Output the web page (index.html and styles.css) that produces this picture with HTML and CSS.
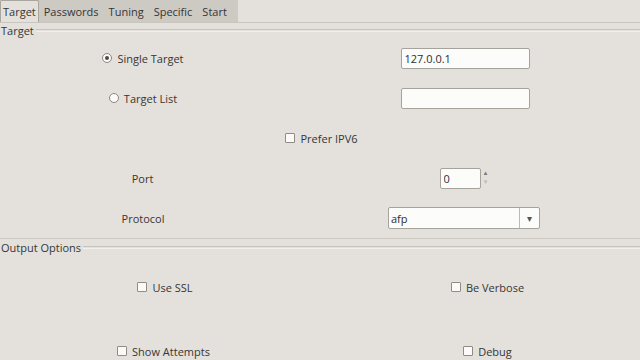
FILE: index.html
```html
<!DOCTYPE html>
<html lang="en">

<head>
    <meta charset="UTF-8">
    <title>xHydra - Target</title>
    <link rel="stylesheet" href="styles.css">
</head>

<body>
    <!-- Notebook tabs -->
    <div class="tab-strip">
        <div class="tabs">
            <span class="tab active">Target</span>
            <span class="tab">Passwords</span>
            <span class="tab">Tuning</span>
            <span class="tab">Specific</span>
            <span class="tab">Start</span>
        </div>
    </div>

    <!-- Target frame -->
    <div class="frame target-frame">
        <div class="frame-title"><span>Target</span></div>
        <div class="target-grid">
            <label class="opt"><span class="radio checked"></span>Single Target</label>
            <div class="cell"><input type="text" class="entry" value="127.0.0.1"></div>

            <label class="opt"><span class="radio"></span>Target List</label>
            <div class="cell"><input type="text" class="entry" value=""></div>

            <label class="opt wide"><span class="check"></span>Prefer IPV6</label>

            <span class="field-label port">Port</span>
            <div class="cell">
                <div class="spin">
                    <input type="text" class="spin-entry" value="0">
                    <span class="spin-arrows">
                        <span class="up">&#9652;</span>
                        <span class="down">&#9662;</span>
                    </span>
                </div>
            </div>

            <span class="field-label">Protocol</span>
            <div class="cell">
                <div class="combo">
                    <span class="combo-text">afp</span>
                    <span class="combo-btn">&#9662;</span>
                </div>
            </div>
        </div>
    </div>

    <!-- Output options frame -->
    <div class="frame">
        <div class="frame-title out-title"><span>Output Options</span></div>
        <div class="output-grid">
            <label class="opt"><span class="check"></span>Use SSL</label>
            <label class="opt right"><span class="check"></span>Be Verbose</label>
            <label class="opt left"><span class="check"></span>Show Attempts</label>
            <label class="opt right"><span class="check"></span>Debug</label>
        </div>
    </div>
</body>

</html>
```

FILE: styles.css
```css
/* General Styles */
body {
    margin: 0;
    background-color: #e4e1dc;
    color: #363636;
    font-family: "Open Sans", "DejaVu Sans", sans-serif;
    font-size: 11px;
    overflow: hidden;
}

/* Tabs */
.tab-strip {
    height: 22px;
    border-bottom: 1px solid #c9c5bf;
}

.tabs {
    display: inline-flex;
    align-items: stretch;
    height: 22px;
    background-color: #cdc9c3;
    padding-right: 6px;
}

.tab {
    display: flex;
    align-items: center;
    padding: 0 5px;
    color: #363636;
}

.tab.active {
    background-color: #e4e1dc;
    border: 1px solid #a9a59f;
    border-bottom: none;
    border-radius: 2px 2px 0 0;
    padding: 0 2px;
}

/* Frames */
.frame-title {
    display: flex;
    align-items: center;
    height: 15px;
    padding-left: 1px;
}

.frame-title::after {
    content: "";
    flex: 1;
    height: 1px;
    margin-left: 2px;
    border-top: 1px solid #c7c3bd;
    border-bottom: 1px solid #f2f0ed;
}

.out-title {
    height: 16px;
}

.target-frame {
    border-bottom: 1px solid #cbc7c1;
}

.target-grid {
    display: grid;
    grid-template-columns: 286px 1fr;
    grid-template-rows: 40px 40px 40px 40px 40px;
    align-items: center;
    justify-items: center;
}

.output-grid {
    display: grid;
    grid-template-columns: 330px 1fr;
    grid-template-rows: 64px 64px;
    align-items: center;
    justify-items: center;
}

/* Options */
.opt {
    display: flex;
    align-items: center;
    gap: 5px;
}

.opt.wide {
    grid-column: 1 / 3;
    margin-left: 3px;
}

.opt.right {
    margin-left: 5px;
}

.opt.left {
    margin-right: 3px;
}

.radio {
    width: 8px;
    height: 8px;
    border: 1px solid #8a8680;
    border-radius: 50%;
    background-color: #fbfaf8;
    position: relative;
}

.radio.checked::after {
    content: "";
    position: absolute;
    top: 2px;
    left: 2px;
    width: 4px;
    height: 4px;
    border-radius: 50%;
    background-color: #4a4a4a;
}

.check {
    width: 8px;
    height: 8px;
    border: 1px solid #8f8b85;
    border-radius: 1px;
    background-color: #fbfaf8;
}

.field-label.port {
    margin-right: 1px;
}

/* Inputs */
.cell {
    justify-self: stretch;
    display: flex;
    justify-content: center;
}

.entry {
    box-sizing: border-box;
    width: 129px;
    height: 21px;
    padding: 0 3px;
    border: 1px solid #a6a29c;
    border-radius: 2px;
    background-color: #fcfcfb;
    font-family: inherit;
    font-size: 11px;
    color: #2e2e2e;
    margin-left: 4px;
}

.spin {
    display: flex;
    align-items: center;
    margin-left: 4px;
}

.spin-entry {
    box-sizing: border-box;
    width: 41px;
    height: 21px;
    padding: 0 3px;
    border: 1px solid #a6a29c;
    border-radius: 2px;
    background-color: #fcfcfb;
    font-family: inherit;
    font-size: 11px;
    color: #2e2e2e;
}

.spin-arrows {
    display: flex;
    flex-direction: column;
    width: 10px;
    height: 20px;
    font-size: 7px;
    line-height: 9px;
    text-align: center;
    color: #777;
}

.spin-arrows .down {
    color: #bbb;
}

.combo {
    box-sizing: border-box;
    display: flex;
    align-items: center;
    width: 152px;
    height: 22px;
    border: 1px solid #a6a29c;
    border-radius: 2px;
    background-color: #fcfcfb;
    margin-left: 2px;
}

.combo-text {
    flex: 1;
    padding-left: 2px;
    color: #2e2e2e;
}

.combo-btn {
    width: 19px;
    height: 20px;
    display: flex;
    align-items: center;
    justify-content: center;
    border-left: 1px solid #bdb9b3;
    font-size: 10px;
    color: #555;
}
```
